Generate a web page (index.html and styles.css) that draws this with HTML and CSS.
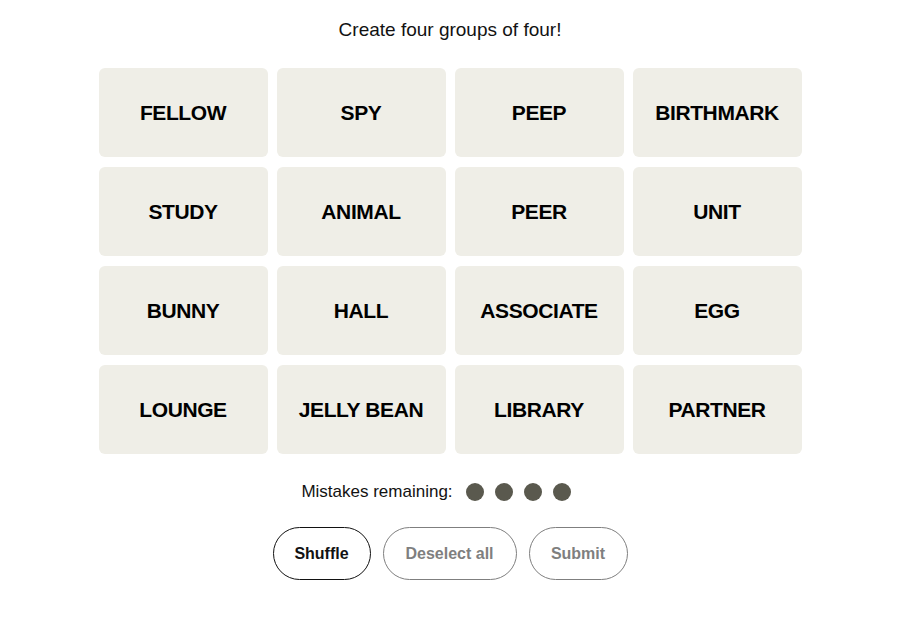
FILE: index.html
```html
<!DOCTYPE html>
<html lang="en">

<head>
    <meta charset="UTF-8">
    <meta name="viewport" content="width=device-width, initial-scale=1.0">
    <title>Connections</title>
    <link rel="stylesheet" href="styles.css">
</head>

<body>
    <div class="game">
        <p class="prompt">Create four groups of four!</p>

        <!-- Word grid -->
        <div class="board">
            <button class="tile">FELLOW</button>
            <button class="tile">SPY</button>
            <button class="tile">PEEP</button>
            <button class="tile">BIRTHMARK</button>
            <button class="tile">STUDY</button>
            <button class="tile">ANIMAL</button>
            <button class="tile">PEER</button>
            <button class="tile">UNIT</button>
            <button class="tile">BUNNY</button>
            <button class="tile">HALL</button>
            <button class="tile">ASSOCIATE</button>
            <button class="tile">EGG</button>
            <button class="tile">LOUNGE</button>
            <button class="tile">JELLY BEAN</button>
            <button class="tile">LIBRARY</button>
            <button class="tile">PARTNER</button>
        </div>

        <div class="mistakes">
            <span>Mistakes remaining:</span>
            <span class="dots">
                <span class="dot"></span>
                <span class="dot"></span>
                <span class="dot"></span>
                <span class="dot"></span>
            </span>
        </div>

        <!-- Controls -->
        <div class="controls">
            <button class="pill pill-active shuffle">Shuffle</button>
            <button class="pill deselect" disabled>Deselect all</button>
            <button class="pill submit" disabled>Submit</button>
        </div>
    </div>
</body>

</html>
```

FILE: styles.css
```css
body {
    font-family: 'Liberation Sans', Arial, sans-serif;
    background: #ffffff;
    color: #000000;
    margin: 0;
}

.game {
    display: flex;
    flex-direction: column;
    align-items: center;
    padding-top: 19px;
}

.prompt {
    margin: 0;
    font-size: 19px;
    line-height: 22px;
    color: #121212;
}

.board {
    display: grid;
    grid-template-columns: repeat(4, 169px);
    grid-auto-rows: 89px;
    column-gap: 9px;
    row-gap: 10px;
    margin-top: 27px;
}

.tile {
    background: #efeee7;
    border: none;
    border-radius: 6px;
    font-family: inherit;
    font-size: 21px;
    font-weight: 700;
    letter-spacing: -0.4px;
    color: #000000;
    padding: 0;
    cursor: pointer;
}

.mistakes {
    display: flex;
    align-items: center;
    gap: 13px;
    margin-top: 28px;
    padding-right: 28px;
    font-size: 17px;
    color: #121212;
}

.dots {
    display: flex;
    gap: 11px;
}

.dot {
    width: 18px;
    height: 18px;
    border-radius: 50%;
    background: #5a594e;
}

.controls {
    display: flex;
    gap: 12px;
    margin-top: 25px;
}

.pill {
    height: 53px;
    border-radius: 27px;
    border: 1px solid #7f7f7f;
    background: #ffffff;
    color: #7f7f7f;
    font-family: inherit;
    font-size: 16px;
    font-weight: 700;
    padding: 0;
}

.pill-active {
    border-color: #121212;
    color: #121212;
    cursor: pointer;
}

.shuffle {
    width: 98px;
}

.deselect {
    width: 134px;
}

.submit {
    width: 99px;
}
```
